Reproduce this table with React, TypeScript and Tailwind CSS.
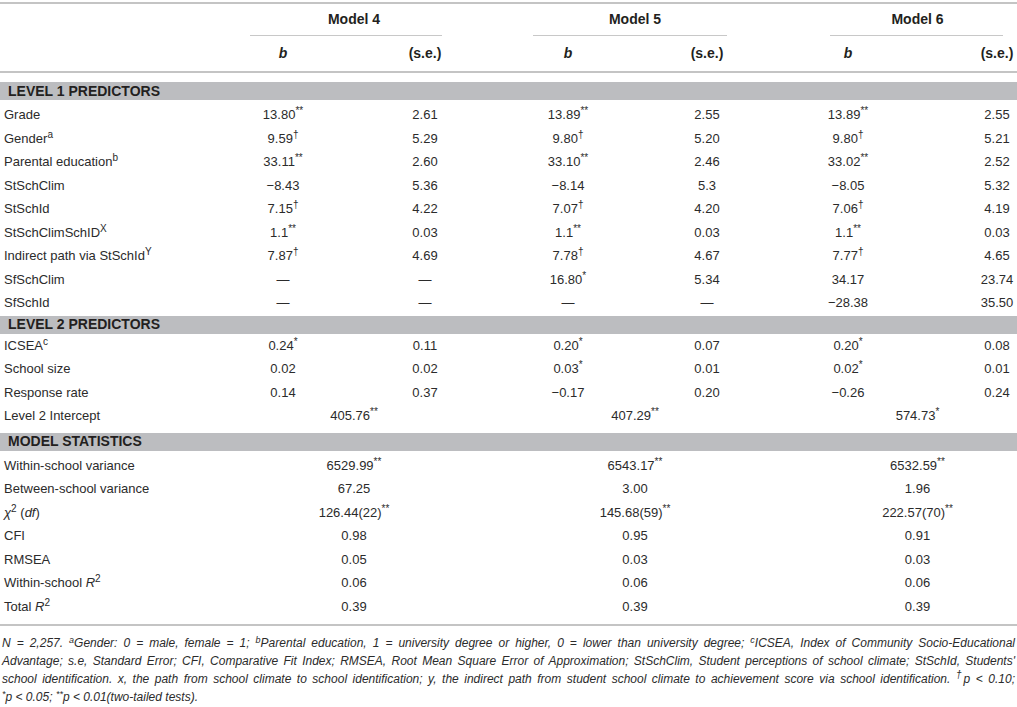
import React from "react";

type Val = { v: string; s?: string };

const grid = "grid grid-cols-[212px_142px_142px_144px_134px_148px_95px]";

const level1: { label: React.ReactNode; cells: Val[] }[] = [
  { label: "Grade", cells: [{ v: "13.80", s: "**" }, { v: "2.61" }, { v: "13.89", s: "**" }, { v: "2.55" }, { v: "13.89", s: "**" }, { v: "2.55" }] },
  { label: <>Gender<sup className="text-[10px]">a</sup></>, cells: [{ v: "9.59", s: "†" }, { v: "5.29" }, { v: "9.80", s: "†" }, { v: "5.20" }, { v: "9.80", s: "†" }, { v: "5.21" }] },
  { label: <>Parental education<sup className="text-[10px]">b</sup></>, cells: [{ v: "33.11", s: "**" }, { v: "2.60" }, { v: "33.10", s: "**" }, { v: "2.46" }, { v: "33.02", s: "**" }, { v: "2.52" }] },
  { label: "StSchClim", cells: [{ v: "−8.43" }, { v: "5.36" }, { v: "−8.14" }, { v: "5.3" }, { v: "−8.05" }, { v: "5.32" }] },
  { label: "StSchId", cells: [{ v: "7.15", s: "†" }, { v: "4.22" }, { v: "7.07", s: "†" }, { v: "4.20" }, { v: "7.06", s: "†" }, { v: "4.19" }] },
  { label: <>StSchClimSchID<sup className="text-[10px]">X</sup></>, cells: [{ v: "1.1", s: "**" }, { v: "0.03" }, { v: "1.1", s: "**" }, { v: "0.03" }, { v: "1.1", s: "**" }, { v: "0.03" }] },
  { label: <>Indirect path via StSchId<sup className="text-[10px]">Y</sup></>, cells: [{ v: "7.87", s: "†" }, { v: "4.69" }, { v: "7.78", s: "†" }, { v: "4.67" }, { v: "7.77", s: "†" }, { v: "4.65" }] },
  { label: "SfSchClim", cells: [{ v: "—" }, { v: "—" }, { v: "16.80", s: "*" }, { v: "5.34" }, { v: "34.17" }, { v: "23.74" }] },
  { label: "SfSchId", cells: [{ v: "—" }, { v: "—" }, { v: "—" }, { v: "—" }, { v: "−28.38" }, { v: "35.50" }] },
];

const level2: { label: React.ReactNode; cells: Val[] }[] = [
  { label: <>ICSEA<sup className="text-[10px]">c</sup></>, cells: [{ v: "0.24", s: "*" }, { v: "0.11" }, { v: "0.20", s: "*" }, { v: "0.07" }, { v: "0.20", s: "*" }, { v: "0.08" }] },
  { label: "School size", cells: [{ v: "0.02" }, { v: "0.02" }, { v: "0.03", s: "*" }, { v: "0.01" }, { v: "0.02", s: "*" }, { v: "0.01" }] },
  { label: "Response rate", cells: [{ v: "0.14" }, { v: "0.37" }, { v: "−0.17" }, { v: "0.20" }, { v: "−0.26" }, { v: "0.24" }] },
];

const stats: { label: React.ReactNode; cells: Val[] }[] = [
  { label: "Within-school variance", cells: [{ v: "6529.99", s: "**" }, { v: "6543.17", s: "**" }, { v: "6532.59", s: "**" }] },
  { label: "Between-school variance", cells: [{ v: "67.25" }, { v: "3.00" }, { v: "1.96" }] },
  { label: <><i>χ</i><sup className="text-[10px]">2</sup> (<i>df</i>)</>, cells: [{ v: "126.44(22)", s: "**" }, { v: "145.68(59)", s: "**" }, { v: "222.57(70)", s: "**" }] },
  { label: "CFI", cells: [{ v: "0.98" }, { v: "0.95" }, { v: "0.91" }] },
  { label: "RMSEA", cells: [{ v: "0.05" }, { v: "0.03" }, { v: "0.03" }] },
  { label: <>Within-school <i>R</i><sup className="text-[10px]">2</sup></>, cells: [{ v: "0.06" }, { v: "0.06" }, { v: "0.06" }] },
  { label: <>Total <i>R</i><sup className="text-[10px]">2</sup></>, cells: [{ v: "0.39" }, { v: "0.39" }, { v: "0.39" }] },
];

function Num({ val }: { val: Val }) {
  return (
    <span>
      {val.v}
      {val.s && <sup className="text-[10px]">{val.s}</sup>}
    </span>
  );
}

function Band({ title, className }: { title: string; className: string }) {
  return (
    <div className={`h-[18px] bg-[#bcbdc0] flex items-center pl-[8px] font-bold text-[14px] text-[#231f20] ${className}`}>
      {title}
    </div>
  );
}

function SplitRow({ label, cells }: { label: React.ReactNode; cells: Val[] }) {
  return (
    <div className={`${grid} h-[23.5px] items-center`}>
      <div className="pl-[4px]">{label}</div>
      {cells.map((c, i) => (
        <div key={i} className={`text-center ${i === 5 ? "pl-[55px]" : ""}`}>
          <Num val={c} />
        </div>
      ))}
    </div>
  );
}

function SpanRow({ label, cells }: { label: React.ReactNode; cells: Val[] }) {
  return (
    <div className={`${grid} h-[23.5px] items-center`}>
      <div className="pl-[4px]">{label}</div>
      {cells.map((c, i) => (
        <div key={i} className={`col-span-2 text-center ${i === 2 ? "pl-[44px]" : ""}`}>
          <Num val={c} />
        </div>
      ))}
    </div>
  );
}

export default function App() {
  return (
    <div className="w-[1017px] h-[707px] bg-white overflow-hidden font-['Liberation_Sans',Arial,sans-serif] text-[13px] text-[#2b2b2b]">
      <div className="pt-[2px]">
        <div className="h-[2px] bg-[#c4c4c4]" />
      </div>

      {/* header */}
      <div className={`${grid} h-[32px] text-[14px]`}>
        <div />
        <div className="col-span-2 flex flex-col justify-between">
          <div className="pt-[7px] leading-[17px] font-bold text-center text-[#231f20]">Model 4</div>
          <div className="h-px bg-[#c8c8c8] ml-[38px] mr-[54px]" />
        </div>
        <div className="col-span-2 flex flex-col justify-between">
          <div className="pt-[7px] leading-[17px] font-bold text-center text-[#231f20]">Model 5</div>
          <div className="h-px bg-[#c8c8c8] ml-[37px] mr-[47px]" />
        </div>
        <div className="col-span-2 flex flex-col justify-between">
          <div className="pt-[7px] pl-[44px] leading-[17px] font-bold text-center text-[#231f20]">Model 6</div>
          <div className="h-px bg-[#c8c8c8] ml-[56px] mr-[14px]" />
        </div>
      </div>
      <div className={`${grid} h-[35px] items-center font-bold text-[14px] text-[#231f20]`}>
        <div />
        <div className="text-center italic">b</div>
        <div className="text-center">(s.e.)</div>
        <div className="text-center italic">b</div>
        <div className="text-center">(s.e.)</div>
        <div className="text-center italic">b</div>
        <div className="text-center pl-[55px]">(s.e.)</div>
      </div>
      <div className="h-[2px] bg-[#c4c4c4]" />

      <Band title="LEVEL 1 PREDICTORS" className="mt-[9px] mb-[3px]" />
      {level1.map((r, i) => (
        <SplitRow key={i} label={r.label} cells={r.cells} />
      ))}

      <Band title="LEVEL 2 PREDICTORS" className="mt-[1px]" />
      {level2.map((r, i) => (
        <SplitRow key={i} label={r.label} cells={r.cells} />
      ))}
      <SpanRow
        label="Level 2 Intercept"
        cells={[{ v: "405.76", s: "**" }, { v: "407.29", s: "**" }, { v: "574.73", s: "*" }]}
      />

      <Band title="MODEL STATISTICS" className="mt-[5px] mb-[3px]" />
      {stats.map((r, i) => (
        <SpanRow key={i} label={r.label} cells={r.cells} />
      ))}

      <div className="mt-[6px] h-[2px] bg-[#c4c4c4]" />

      <div className="mt-[8px] pl-[2px] pr-[2px] italic text-[12px] leading-[18px] text-[#2b2b2b]">
        <div className="whitespace-nowrap [text-align-last:justify]">
          N = 2,257. <sup className="text-[9px]">a</sup>Gender: 0 = male, female = 1; <sup className="text-[9px]">b</sup>Parental education, 1 = university degree or higher, 0 = lower than university degree; <sup className="text-[9px]">c</sup>ICSEA, Index of Community Socio-Educational
        </div>
        <div className="whitespace-nowrap [text-align-last:justify]">
          Advantage; s.e, Standard Error; CFI, Comparative Fit Index; RMSEA, Root Mean Square Error of Approximation; StSchClim, Student perceptions of school climate; StSchId, Students'
        </div>
        <div className="whitespace-nowrap [text-align-last:justify]">
          school identification. x, the path from school climate to school identification; y, the indirect path from student school climate to achievement score via school identification. <sup className="text-[10px]">†</sup>p &lt; 0.10;
        </div>
        <div className="whitespace-nowrap">
          <sup className="text-[9px]">*</sup>p &lt; 0.05; <sup className="text-[9px]">**</sup>p &lt; 0.01(two-tailed tests).
        </div>
      </div>
    </div>
  );
}
